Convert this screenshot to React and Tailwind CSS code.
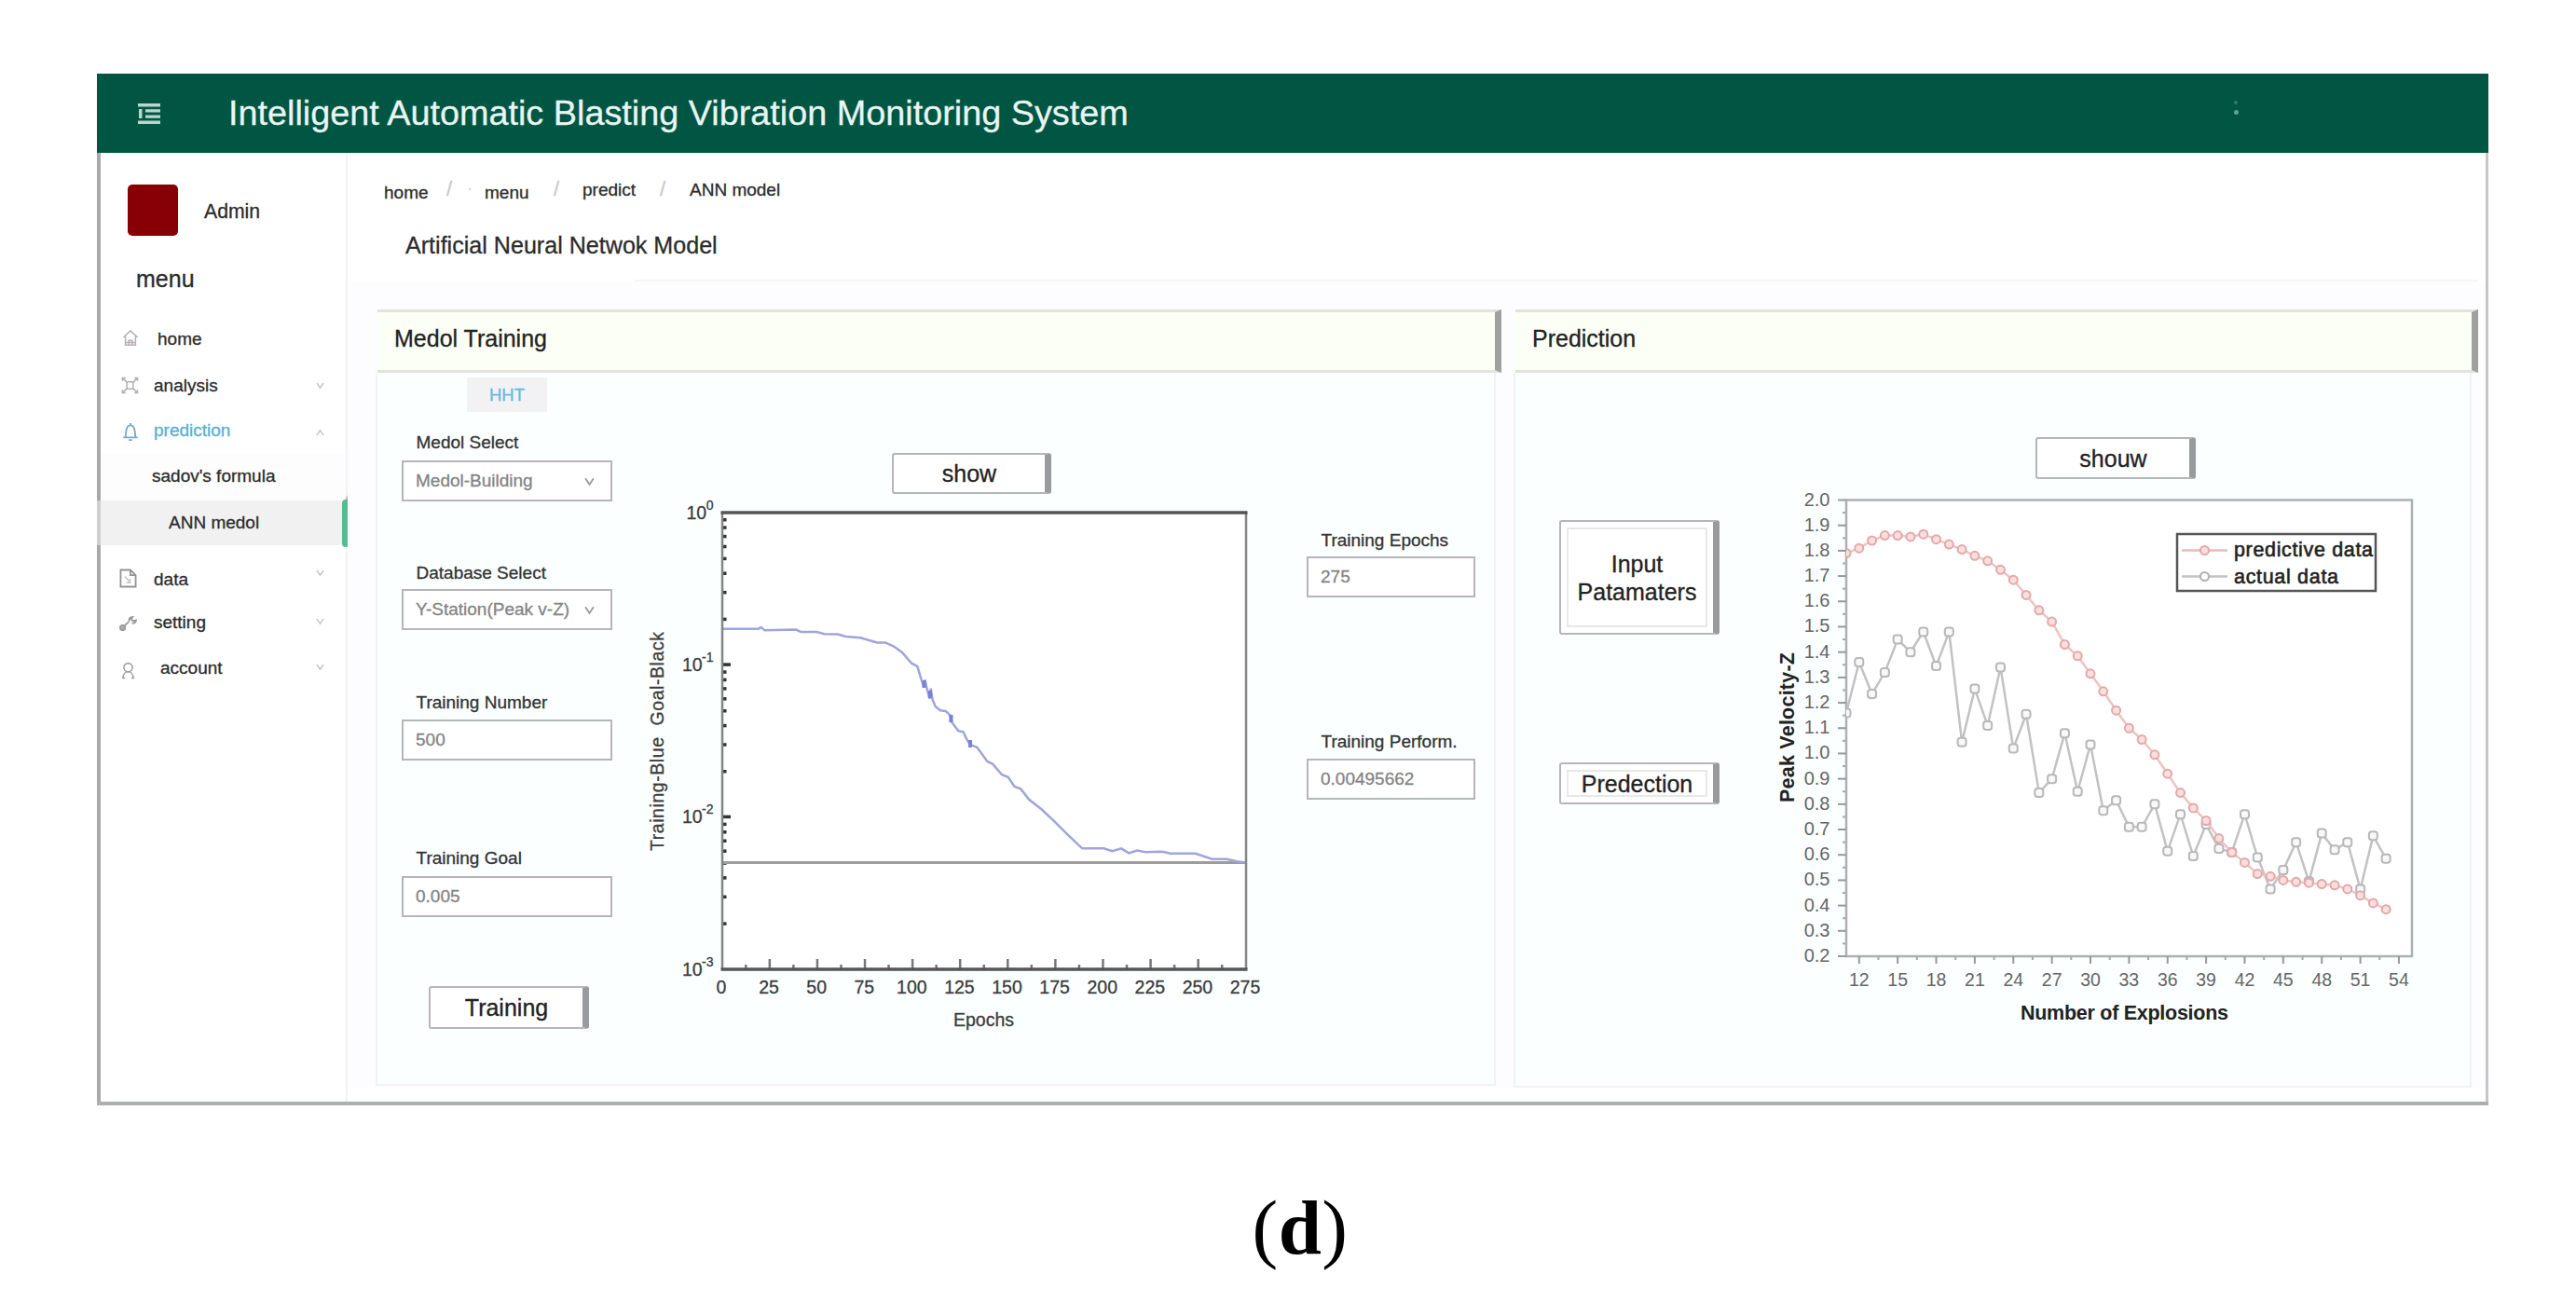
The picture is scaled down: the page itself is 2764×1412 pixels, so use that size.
import React from 'react';

// --- SIDEBAR ICONS ---
const HomeIcon = () => (
  <svg width="18" height="19" viewBox="0 0 20 20" fill="none" stroke="#b9b0b8" strokeWidth="1.7">
    <path d="M1.5 9.5 10 1.5l8.5 8M4 8v10.5h12V8M8 18v-5h4v5M5 15.5h10" />
  </svg>
);

const AnalysisIcon = () => (
  <svg width="19" height="19" viewBox="0 0 20 20" fill="none" stroke="#b3b3b3" strokeWidth="1.6">
    <path d="M1.5 5V1.5H5M15 1.5h3.5V5M1.5 15v3.5H5M15 18.5h3.5V15M2 2l5 5M18 2l-5 5M2 18l5-5M18 18l-5-5" />
    <rect x="6.5" y="6" width="7" height="8" rx="2" />
  </svg>
);

const BellIcon = () => (
  <svg width="18" height="21" viewBox="0 0 20 22" fill="none" stroke="#7ba6c4" strokeWidth="2">
    <path d="M1.5 17.5h17M4 17l1-8c.5-3.500 2.500-6 5-6s4.500 2.500 5 6l1 8M10 .5V3M8 20.500h4" />
  </svg>
);

const FileIcon = () => (
  <svg width="19" height="21" viewBox="0 0 20 22" fill="none" stroke="#949494" strokeWidth="1.900">
    <path d="M1.500 1.500h11l6 6v13h-17zM12.500 1.500v6h6" />
    <path d="M6 9l7 7M12 11.500v4.500H8" stroke="#c4c4c4" strokeWidth="1.500" />
  </svg>
);

const ToolIcon = () => (
  <svg width="20" height="18" viewBox="0 0 22 20" fill="none" stroke="#9a9a9a" strokeWidth="2">
    <path d="M7 13l6-6M13 7c-1-3 1-5 4-5l-2 3 2.500 2L21 6c0 3-3 4-5 3.500" />
    <circle cx="5" cy="15" r="3" fill="#b0b0b0" />
  </svg>
);

const UserIcon = () => (
  <svg width="15" height="19" viewBox="0 0 18 22" fill="none" stroke="#a2a2a2" strokeWidth="1.900">
    <circle cx="9" cy="7" r="5.500" />
    <path d="M2.500 20.500c0-4.500 2.500-8 6.500-8s6.500 3.500 6.500 8M1 20.500h4M13 20.500h4" />
  </svg>
);

const Chevron = ({ up = false, size = 9, color = '#c4c4c4' }) => (
  <svg width={size} height={size} viewBox="0 0 10 10" fill="none" stroke={color} strokeWidth="1.600">
    <path d={up ? 'M1 8l4-6 4 6' : 'M1 2l4 6 4-6'} />
  </svg>
);

const navItems = [
  { label: 'home', icon: HomeIcon, row: 'h-[49px]', iconPos: 'w-[25px] mb-1', text: 'ml-[17px]' },
  { label: 'analysis', icon: AnalysisIcon, row: 'h-[50px]', iconPos: 'w-[25px] mb-0.5', text: 'ml-[13px]', chevron: 'down', chevronPos: 'mb-0.5' },
  { label: 'prediction', icon: BellIcon, row: 'h-[47px] border-[#5d8cab]', iconPos: 'w-[25px] mt-0.5', text: 'ml-[13px] text-[#55afd6]', chevron: 'up', chevronPos: 'mt-[3px]' },
  { label: "sadov's formula", row: 'h-[51px] border-[#a3a5ae] bg-[#fdfdfd]', text: 'ml-[36px]' },
  { label: 'ANN medol', row: 'h-12 border-[#cfcfcf] bg-[#f1f1f1]', text: 'ml-[54px]', active: true },
  { label: 'data', icon: FileIcon, row: 'mt-[13px] h-[48px]', iconPos: 'w-5 mb-1', text: 'ml-[18px]', chevron: 'down', chevronPos: 'mb-[15px]' },
  { label: 'setting', icon: ToolIcon, row: 'h-[45px]', iconPos: 'w-5', text: 'ml-[18px]', chevron: 'down', chevronPos: 'mb-[5px]' },
  { label: 'account', icon: UserIcon, row: 'h-[53px]', iconPos: 'w-5 mt-[3px]', text: 'ml-[25px]', chevron: 'down', chevronPos: 'mb-1' },
];

// --- CHART DATA ---
const trainingCurve =
  '213,510 300,510 306,506 315,514 390,512 402,518 440,518 458,523 490,524 510,530 545,533 585,545 605,545 625,555 645,570 ' +
  '668,598 682,606 690,635 697,658 700,640 706,668 711,688 714,662 718,690 725,708 737,718 750,720 760,730 763,746 780,770 792,773 ' +
  '802,795 810,806 825,812 850,848 863,855 885,882 900,888 915,912 930,918 950,945 980,970 1010,1000 1045,1037 1078,1070 ' +
  '1130,1070 1150,1077 1172,1070 1190,1082 1210,1075 1230,1079 1270,1078 1290,1083 1350,1083 1370,1090 1390,1097 1425,1097 1450,1103 1471,1106';

// both series start at explosion no. 11
const predictive = [
  1.79, 1.81, 1.84, 1.86, 1.86, 1.855, 1.865, 1.845, 1.825, 1.805, 1.78, 1.76, 1.725, 1.685, 1.625, 1.565, 1.52, 1.43, 1.385, 1.315, 1.245, 1.17,
  1.1, 1.055, 0.995, 0.92, 0.845, 0.785, 0.735, 0.665, 0.61, 0.57, 0.525, 0.515, 0.5, 0.493, 0.49, 0.485, 0.48, 0.465, 0.44, 0.41, 0.385,
];
const actual = [
  1.16, 1.36, 1.235, 1.32, 1.45, 1.4, 1.48, 1.345, 1.48, 1.045, 1.255, 1.11, 1.34, 1.02, 1.155, 0.845, 0.9, 1.08, 0.85, 1.035, 0.775, 0.815,
  0.71, 0.71, 0.8, 0.615, 0.76, 0.595, 0.72, 0.625, 0.61, 0.76, 0.59, 0.465, 0.54, 0.65, 0.495, 0.685, 0.62, 0.65, 0.465, 0.675, 0.585,
];

const TrainingChart = () => {
  const left = 85, right = 647, top = 20, bottom = 510;
  const decade = (bottom - top) / 3;
  const minor = [];
  for (let d = 0; d < 3; d++) {
    for (let k = 2; k <= 9; k++) minor.push(top + decade * (d + 1 - Math.log10(k)));
  }
  return (
    <svg width="680" height="590" viewBox="0 0 680 590" className="block text-[19.5px]" fill="#3c3c3c">
      <rect x={left} y={top} width={right - left} height={bottom - top} fill="#fff" />
      {minor.map((y) => <rect key={y} x={left} y={y - 1.5} width="4.500" height="3.500" fill="#333" />)}
      {[1, 2].map((d) => <rect key={d} x={left} y={top + decade * d - 2} width="9" height="3.500" fill="#333" />)}
      {Array.from({ length: 23 }, (_, i) => i).filter((i) => i > 0 && i < 22).map((i) => (
        <rect key={i} x={left + (i * (right - left)) / 22 - 1.5} y={bottom - (i % 2 ? 5 : 11)} width="2.500" height={i % 2 ? 5 : 11} fill="#777" />
      ))}
      <path d={`M${left} 395.500H${right}`} stroke="#9d9d9d" strokeWidth="3" />
      <polyline points={trainingCurve} transform="translate(-10 -70) scale(.4464 .4209)" vectorEffect="non-scaling-stroke" fill="none" stroke="#a0a4dc" strokeWidth="2.500" />
      {[[301.5, 204], [308, 215], [330.5, 241], [351, 268]].map(([x, y]) => (
        <rect key={x} x={x - 2} y={y - 4} width="4" height="8" fill="#7a82d6" />
      ))}
      <path d={`M${left} ${top}V${bottom}M${right} ${top}V${bottom}`} stroke="#858585" strokeWidth="2.500" />
      <path d={`M${left - 1.5} ${top}H${right + 1.5}M${left - 1.5} ${bottom}H${right + 1.5}`} stroke="#555" strokeWidth="3.500" />
      <g stroke="#3c3c3c" strokeWidth=".3">
        {['0', '-1', '-2', '-3'].map((e, i) => (
          <g key={e}>
            <text x={i ? 42 : 46.500} y={top + decade * i + 6.5}>10</text>
            <text x="75.500" y={top + decade * i - 3.5} textAnchor="end" fontSize="14">{e}</text>
          </g>
        ))}
        {Array.from({ length: 12 }, (_, i) => (
          <text key={i} x={left - 1 + (i * (right - left)) / 11} y="536" textAnchor="middle">{i * 25}</text>
        ))}
        <text x="365.500" y="571" textAnchor="middle">Epochs</text>
        <text transform="translate(22 383) rotate(-90)" textLength="235" xmlSpace="preserve">{'Training-Blue  Goal-Black'}</text>
      </g>
    </svg>
  );
};

const PredictionChart = () => {
  const px = (n) => 111 + (n - 11) * 13.79;
  const py = (v) => 506 - ((v - 0.2) / 1.8) * 489.5;
  const line = (data) => data.map((v, i) => `${px(i + 11)},${py(v)}`).join(' ');
  return (
    <svg width="780" height="600" viewBox="0 0 780 600" className="block text-[20px]" fill="#666">
      <rect x="111" y="16.500" width="607" height="489.500" fill="#fff" stroke="#b0b0b0" strokeWidth="2.500" />
      {Array.from({ length: 19 }, (_, i) => {
        const v = 2 - i * 0.1;
        return (
          <g key={i}>
            <rect x="102" y={py(v) - 1} width="9" height="2" fill="#999" />
            {i < 18 && <rect x="107" y={py(v - 0.05) - 1} width="4" height="2" fill="#aaa" />}
            <text x="93.500" y={py(v) + 6} textAnchor="end">{v.toFixed(1)}</text>
          </g>
        );
      })}
      {Array.from({ length: 15 }, (_, i) => (
        <g key={i}>
          <rect x={px(12 + i * 3) - 1} y="506" width="2" height="8" fill="#999" />
          {i < 14 && <rect x={px(13.5 + i * 3) - 1} y="506" width="2" height="4" fill="#aaa" />}
          <text x={px(12 + i * 3)} y="537.500" textAnchor="middle" fontSize="19.500">{12 + i * 3}</text>
        </g>
      ))}

      <clipPath id="plot"><rect x="111" y="16" width="607" height="490" /></clipPath>
      <g clipPath="url(#plot)" fill="none">
        <polyline points={line(actual)} stroke="#c2c2c2" strokeWidth="2.500" />
        {actual.map((v, i) => <rect key={i} x={px(i + 11) - 4.5} y={py(v) - 4.5} width="9" height="9" rx="3" fill="#f8f8f8" stroke="#b8b8b8" strokeWidth="2" />)}
        <polyline points={line(predictive)} stroke="#f0c2c2" strokeWidth="2.500" />
        {predictive.map((v, i) => <circle key={i} cx={px(i + 11)} cy={py(v)} r="4.500" fill="#f9dfdf" stroke="#e5a8a8" strokeWidth="2" />)}
      </g>

      {/* legend */}
      <rect x="466" y="53" width="213" height="61" fill="#fff" stroke="#555" strokeWidth="2.500" />
      <path d="M471 70.500h49" stroke="#edb9b9" strokeWidth="2.500" />
      <circle cx="495.500" cy="70.500" r="4.500" fill="#f9dfdf" stroke="#e5a8a8" strokeWidth="2" />
      <path d="M471 98.500h49" stroke="#c2c2c2" strokeWidth="2.500" />
      <circle cx="495.500" cy="98.500" r="4.500" fill="#fff" stroke="#b0b0b0" strokeWidth="2" />
      <g fill="#222" stroke="#222" strokeWidth=".6" fontSize="21.500">
        <text x="527" y="77" textLength="149">predictive data</text>
        <text x="527" y="105.500" textLength="112">actual data</text>
      </g>
      <g fill="#222" fontWeight="bold" fontSize="21.500">
        <text x="298" y="574" textLength="223">Number of Explosions</text>
        <text transform="translate(54.500 341) rotate(-90)" textLength="161">Peak Velocity-Z</text>
      </g>
    </svg>
  );
};

// --- FORM PIECES ---
const Field = ({ label, value, select, className, boxClass }) => (
  <div className={className}>
    <div className="h-[26px] pl-[15.5px] leading-[26px] text-[#333]">{label}</div>
    <div className={`flex h-11 items-center border-[2.5px] border-[#b4b7b8] bg-white pl-[13px] text-[#848484] ${boxClass}`}>
      <span className="whitespace-nowrap">{value}</span>
      {select && <span className="ml-auto mr-[17px]"><Chevron size={11} color="#999" /></span>}
    </div>
  </div>
);

const RaisedButton = ({ className, children }) => (
  <button className={`flex items-center justify-center rounded-[3px] border-2 border-r-[7px] border-[#b4b7b9] border-r-[#989b9d] bg-white text-[25px] leading-[30px] text-[#222] ${className}`}>
    {children}
  </button>
);

const Panel = ({ title, className, bodyClass, children }) => (
  <section className={className}>
    <h2 className="ml-0.5 flex h-[68px] items-center border-y-[3px] border-r-[7px] border-y-[#e1e3dd] border-r-[#a0a09e] bg-[#fcfff5] pb-1 pl-[18px] text-[25px] text-[#222]">{title}</h2>
    <div className={`flex border-2 border-t-0 border-[#f0f2f4] bg-[#fbffff] ${bodyClass}`}>{children}</div>
  </section>
);

const App = () => {
  return (
    <div className="flex h-[1412px] w-[2764px] flex-col overflow-hidden bg-white pl-[104px] pt-[79px] font-['Liberation_Sans',Arial,sans-serif] text-[19px] text-[#2c2c2c] [-webkit-text-stroke:0.3px]">
      <div className="h-[1107px] w-[2566px] border-b-4 border-[#adb0af]">
        {/* TOP BAR */}
        <header className="flex h-[85px] items-center bg-[#005643] text-[#e9f5f1]">
          <svg width="24" height="22" viewBox="0 0 24 22" className="ml-11" fill="#b9d6cd">
            <path d="M0 0h24v3.500H0zM8 6.200h16v3.300H8zM8 12.500h16v3.300H8zM0 18.500h24V22H0zM1 6h3.500v10H1z" />
          </svg>
          <h1 className="ml-[73px] whitespace-nowrap pt-px text-[37.8px] leading-none">Intelligent Automatic Blasting Vibration Monitoring System</h1>
          <div className="ml-auto mr-[268px] flex flex-col gap-1.5 pb-3">
            <i className="size-1 rounded-full bg-[#2f7b69]" />
            <i className="size-[5px] rounded-full bg-[#5da393]" />
          </div>
        </header>

        <div className="flex h-[1018px] border-l-4 border-r-[3px] border-l-[#a9a9a9] border-r-[#c6c6c6]">
          {/* SIDEBAR */}
          <aside className="w-[265px] shrink-0 border-r-2 border-[#f3f3f5]">
            <div className="flex items-center pl-[29px] pt-[34px]">
              <div className="h-[55px] w-[54px] rounded-[5px] bg-[#870006]" />
              <span className="ml-7 mt-0.5 text-[21.2px]">Admin</span>
            </div>
            <div className="mt-[26px] h-10 pl-[38px] text-[25px] leading-10">menu</div>
            <nav className="mt-[21px]">
              {navItems.map((item) => {
                const Icon = item.icon;
                return (
                  <div key={item.label} className={`-ml-1 flex items-center border-l-4 border-[#a9a9a9] pl-[19px] ${item.row}`}>
                    {Icon && <span className={`flex shrink-0 justify-center ${item.iconPos}`}><Icon /></span>}
                    <span className={item.text}>{item.label}</span>
                    {item.chevron && <span className={`ml-auto mr-[23px] ${item.chevronPos}`}><Chevron up={item.chevron === 'up'} /></span>}
                    {item.active && <i className="-mr-1 ml-auto h-[51px] w-2 rounded-sm bg-[#58bb8f] shadow-[4px_-4px_2px_#aaa]" />}
                  </div>
                );
              })}
            </nav>
          </aside>

          {/* MAIN AREA */}
          <main className="flex-1">
            <div className="mt-[27px] flex h-[33px] items-center pl-[39px]">
              <span className="w-[67px]">home</span>
              <span className="mb-2.5 w-[22px] text-[22px] text-[#c9c9c9]">/</span>
              <span className="mb-2.5 w-[19px] text-[#ddd]">·</span>
              <span className="w-[74px]">menu</span>
              <span className="mb-2.5 w-[31px] text-[22px] text-[#c9c9c9]">/</span>
              <span className="mb-1.5 w-[83px]">predict</span>
              <span className="mb-2.5 w-8 text-[22px] text-[#c9c9c9]">/</span>
              <span className="mb-1.5">ANN model</span>
            </div>
            <h2 className="mt-[19px] h-10 pl-[62px] text-[25.1px] leading-10">Artificial Neural Netwok Model</h2>
            <div className="ml-[308px] mr-2 mt-[17px] h-0.5 bg-[#f6f6f6]" />

            <div className="flex bg-[#fdfdff] pl-[30px] pt-[30px]">
              <Panel title="Medol Training" className="w-[1208px]" bodyClass="h-[765px] mr-1.5">
                <div className="w-[285px] shrink-0">
                  <div className="ml-[96px] mt-[5px] flex h-[37px] w-[86px] items-center justify-center bg-[#f2f2f4] text-[18.5px] text-[#69b8de]">HHT</div>
                  <Field label="Medol Select" value="Medol-Building" select className="ml-[26px] mt-5 w-[226px]" boxClass="mt-1.5" />
                  <Field label="Database Select" value="Y-Station(Peak v-Z)" select className="ml-[26px] mt-16 w-[226px]" boxClass="mt-1" />
                  <Field label="Training Number" value="500" className="ml-[26px] mt-[65px] w-[226px]" boxClass="mt-[5px]" />
                  <Field label="Training Goal" value="0.005" className="ml-[26px] mt-[92px] w-[226px]" boxClass="mt-[6px]" />
                  <RaisedButton className="ml-[55px] mt-[74px] h-[46px] w-[172px]">Training</RaisedButton>
                </div>
                <div className="w-[660px] shrink-0">
                  <RaisedButton className="ml-[267px] mt-[86px] h-11 w-[171px]">show</RaisedButton>
                  <TrainingChart />
                </div>
                <div className="flex-1">
                  <Field label="Training Epochs" value="275" className="ml-[52px] mt-[167px] w-[181px]" boxClass="mt-1" />
                  <Field label="Training Perform." value="0.00495662" className="ml-[52px] mt-[142px] w-[181px]" boxClass="mt-[5px]" />
                </div>
              </Panel>

              <Panel title="Prediction" className="ml-[13px] w-[1035px]" bodyClass="h-[767px] mr-[7px]">
                <div className="w-[243px] shrink-0">
                  <RaisedButton className="ml-[47px] mt-[158px] h-[123px] w-[172px] p-1.5">
                    <span className="flex h-full w-full items-center justify-center border-2 border-[#e8e8e8]">Input<br />Patamaters</span>
                  </RaisedButton>
                  <RaisedButton className="ml-[47px] mt-[137px] h-[45px] w-[172px] p-1.5">
                    <span className="flex h-full w-full items-center justify-center border-2 border-[#e8e8e8]">Predection</span>
                  </RaisedButton>
                </div>
                <div className="flex-1 pl-px">
                  <RaisedButton className="ml-[314px] mt-[69px] h-[45px] w-[172px]">shouw</RaisedButton>
                  <div className="mt-1.5"><PredictionChart /></div>
                </div>
              </Panel>
            </div>
          </main>
        </div>
      </div>

      {/* figure caption */}
      <div className="ml-[1185px] mt-[84px] w-[212px] text-center font-['Liberation_Serif',serif] text-[83px] leading-[94px] tracking-[0.5px] text-black [-webkit-text-stroke:0]">
        (<b>d</b>)
      </div>
    </div>
  );
};

export default App;
